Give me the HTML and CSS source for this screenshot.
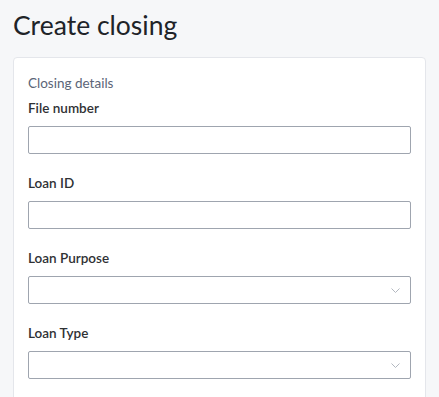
FILE: index.html
```html
<!DOCTYPE html>
<html lang="en">
<head>
<meta charset="utf-8">
<title>Create closing</title>
<link rel="stylesheet" href="styles.css">
</head>
<body>
<main class="page">
  <h1 class="page-title">Create closing</h1>
  <section class="card">
    <h2 class="section-title">Closing details</h2>
    <div class="field">
      <label class="label" for="file">File number</label>
      <input class="input" id="file" type="text">
    </div>
    <div class="field">
      <label class="label" for="loanid">Loan ID</label>
      <input class="input" id="loanid" type="text">
    </div>
    <div class="field">
      <label class="label">Loan Purpose</label>
      <div class="input select">
        <svg class="chevron" width="9" height="5" viewBox="0 0 9 5"><path d="M0.5 0.5 L4.5 4.5 L8.5 0.5" fill="none" stroke="#b3b8c0" stroke-width="1"/></svg>
      </div>
    </div>
    <div class="field">
      <label class="label">Loan Type</label>
      <div class="input select">
        <svg class="chevron" width="9" height="5" viewBox="0 0 9 5"><path d="M0.5 0.5 L4.5 4.5 L8.5 0.5" fill="none" stroke="#b3b8c0" stroke-width="1"/></svg>
      </div>
    </div>
  </section>
</main>
</body>
</html>
```
FILE: styles.css
```css
html, body {
  margin: 0;
  padding: 0;
  background: #f6f7f9;
  font-family: Lato, "Open Sans", "Liberation Sans", sans-serif;
  overflow: hidden;
}
.page {
  padding: 7px 13px 0 13px;
}
.page-title {
  margin: 0 0 14px 0;
  font-size: 26.5px;
  line-height: 36px;
  font-weight: 400;
  color: #202328;
}
.card {
  background: #ffffff;
  border: 1px solid #e4e6eb;
  border-radius: 4px;
  padding: 15px 14px 30px 14px;
}
.section-title {
  margin: 0 0 5px 0;
  font-size: 13.5px;
  line-height: 20px;
  font-weight: 400;
  color: #5b6577;
}
.field {
  display: flex;
  flex-direction: column;
  margin-bottom: 19px;
}
.label {
  font-size: 13.5px;
  line-height: 20px;
  font-weight: 600;
  color: #2f3134;
  margin-bottom: 8px;
}
.input {
  box-sizing: border-box;
  height: 28px;
  width: 100%;
  border: 1px solid #9fa5af;
  border-radius: 2px;
  background: #ffffff;
  margin: 0;
  padding: 0 8px;
  font: inherit;
}
.select {
  display: flex;
  align-items: center;
  justify-content: flex-end;
  padding-right: 10px;
}
.chevron {
  display: block;
}
```
